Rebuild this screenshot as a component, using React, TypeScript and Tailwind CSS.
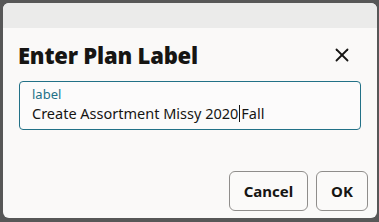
import { X } from "lucide-react";

export default function App() {
  return (
    <div className="w-[379px] h-[222px] bg-[#575757] pt-[3px] pl-[3px] pr-[2px] pb-[4px] font-['Noto_Sans',sans-serif]">
      <div className="h-full rounded-[6px] bg-[#faf9f8] flex flex-col overflow-hidden">
        {/* blurred header strip behind the dialog */}
        <div className="h-[25px] bg-[#ebebea] shrink-0" />
        <div className="flex items-center justify-between pl-[15px] pr-[24px] pt-[13px]">
          <h1 className="font-['Open_Sans',sans-serif] font-extrabold text-[22px] leading-[28px] text-[#161513] tracking-[-0.2px]">
            Enter Plan Label
          </h1>
          <X size={22} strokeWidth={2} className="text-[#161513]" />
        </div>
        <div className="mx-[16px] mt-[12px] h-[49px] border border-[#227187] rounded-[4px] px-[12px] pt-[4px] bg-white/40">
          <div className="text-[13px] leading-[17px] text-[#227187]">label</div>
          <div className="text-[14.5px] leading-[21px] text-[#161513] flex items-center">
            Create Assortment Missy 2020
            <span className="inline-block w-px h-[17px] bg-[#161513] mx-[1px]" />
            Fall
          </div>
        </div>
        <div className="flex justify-end gap-[8px] pr-[9px] mt-auto mb-[7px]">
          <button className="w-[79px] h-[40px] border border-[#8f8d8b] rounded-[6px] bg-[#fbfaf9] text-[15px] font-bold text-[#161513]">
            Cancel
          </button>
          <button className="w-[52px] h-[40px] border border-[#8f8d8b] rounded-[6px] bg-[#fbfaf9] text-[15px] font-bold text-[#161513]">
            OK
          </button>
        </div>
      </div>
    </div>
  );
}
